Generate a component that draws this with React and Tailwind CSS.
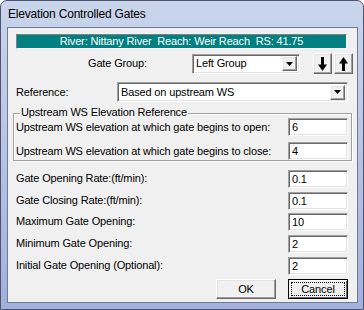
import React from "react";

const sunken =
  "bg-white border border-t-[#a0a0a0] border-l-[#a0a0a0] border-b-white border-r-white shadow-[inset_1px_1px_0_#696969,inset_-1px_-1px_0_#e3e3e3]";
const raised =
  "bg-[#f0f0f0] border border-t-white border-l-white border-b-[#696969] border-r-[#696969] shadow-[inset_-1px_-1px_0_#a0a0a0,inset_1px_1px_0_#e3e3e3]";

function Field({ value, className = "" }) {
  return (
    <div className={`w-[60px] h-[18px] flex items-center pl-[3px] leading-none ${sunken} ${className}`}>
      {value}
    </div>
  );
}

function Caret() {
  return (
    <svg width="7" height="4" viewBox="0 0 7 4">
      <path d="M0 0h7L3.5 4z" fill="#000" />
    </svg>
  );
}

function Select({ value, className }) {
  return (
    <div className={`flex items-center justify-between pl-[3px] pr-[2px] ${sunken} ${className}`}>
      <span className="leading-none">{value}</span>
      <div className={`w-[15px] h-[15px] flex items-center justify-center ${raised}`}>
        <Caret />
      </div>
    </div>
  );
}

function Arrow({ up }) {
  return (
    <div className={`w-[19px] h-[21px] flex items-center justify-center ${raised}`}>
      <svg width="9" height="14" viewBox="0 0 9 14" className={up ? "rotate-180" : ""}>
        <rect x="3" y="0" width="3" height="8" fill="#000" />
        <path d="M0 7.5h9L4.5 14z" fill="#000" />
      </svg>
    </div>
  );
}

function Row({ label, value, className = "" }) {
  return (
    <div className={`flex items-center h-[18px] ${className}`}>
      <span className="ml-[8px] w-[272px] leading-none -mt-[2px]">{label}</span>
      <Field value={value} />
    </div>
  );
}

export default function App() {
  return (
    <div
      className="w-[364px] h-[310px] flex flex-col rounded-t-[7px] border border-[#4c5470] bg-[linear-gradient(180deg,#c9d5ea_0%,#bfcbe6_30%,#a3b0dc_100%)] overflow-hidden"
      style={{ fontFamily: '"Liberation Sans", Arial, sans-serif' }}
    >
      {/* Title bar */}
      <div className="h-[26px] flex items-center pl-[7px] text-[12px] tracking-[-0.2px] text-black shrink-0">
        Elevation Controlled Gates
      </div>

      {/* Client area */}
      <div className="ml-[6px] w-[351px] h-[276px] border border-[#6f7a98] bg-[#f0f0f0] text-[11px] tracking-[-0.15px] text-black flex flex-col">
        <div className="mt-[6px] ml-[8px] w-[331px] h-[15px] bg-[#008080] border border-t-[#808080] border-l-[#808080] border-b-white border-r-white text-white flex items-center justify-center leading-none whitespace-pre">
          River: Nittany River  Reach: Weir Reach  RS: 41.75
        </div>

        <div className="mt-[4px] h-[21px] flex items-center">
          <span className="ml-[80px] w-[104px] leading-none">Gate Group:</span>
          <Select value="Left Group" className="w-[108px] h-[20px]" />
          <div className="ml-[13px] flex gap-[2px]">
            <Arrow />
            <Arrow up />
          </div>
        </div>

        <div className="mt-[8px] h-[20px] flex items-center">
          <span className="ml-[8px] w-[101px] leading-none">Reference:</span>
          <Select value="Based on upstream WS" className="w-[231px] h-[20px]" />
        </div>

        <div className="relative mt-[11px] ml-[5px] w-[339px] h-[48px] border border-[#a0a0a0] shadow-[inset_1px_1px_0_#fff,1px_1px_0_#fff]">
          <span className="absolute -top-[7px] left-[6px] px-[1px] bg-[#f0f0f0] leading-none">
            Upstream WS Elevation Reference
          </span>
          <div className="mt-[4px] flex items-center h-[18px]">
            <span className="ml-[2px] w-[272px] leading-none">
              Upstream WS elevation at which gate begins to open:
            </span>
            <Field value="6" />
          </div>
          <div className="mt-[6px] flex items-center h-[18px]">
            <span className="ml-[2px] w-[272px] leading-none">
              Upstream WS elevation at which gate begins to close:
            </span>
            <Field value="4" />
          </div>
        </div>

        <Row className="mt-[9px]" label="Gate Opening Rate:(ft/min):" value="0.1" />
        <Row className="mt-[4px]" label="Gate Closing Rate:(ft/min):" value="0.1" />
        <Row className="mt-[3px]" label="Maximum Gate Opening:" value="10" />
        <Row className="mt-[4px]" label="Minimum Gate Opening:" value="2" />
        <Row className="mt-[4px]" label="Initial Gate Opening (Optional):" value="2" />

        <div className="mt-[4px] h-[20px] flex justify-end gap-[12px] pr-[9px]">
          <button className={`w-[60px] h-[20px] leading-none ${raised}`}>OK</button>
          <button className="w-[60px] h-[20px] leading-none bg-[#f0f0f0] border border-black shadow-[inset_1px_1px_0_#fff,inset_-1px_-1px_0_#696969] flex items-center justify-center">
            <span className="border border-dotted border-black px-[6px] py-[2px] w-[54px] h-[14px] flex items-center justify-center">
              Cancel
            </span>
          </button>
        </div>
      </div>
    </div>
  );
}
